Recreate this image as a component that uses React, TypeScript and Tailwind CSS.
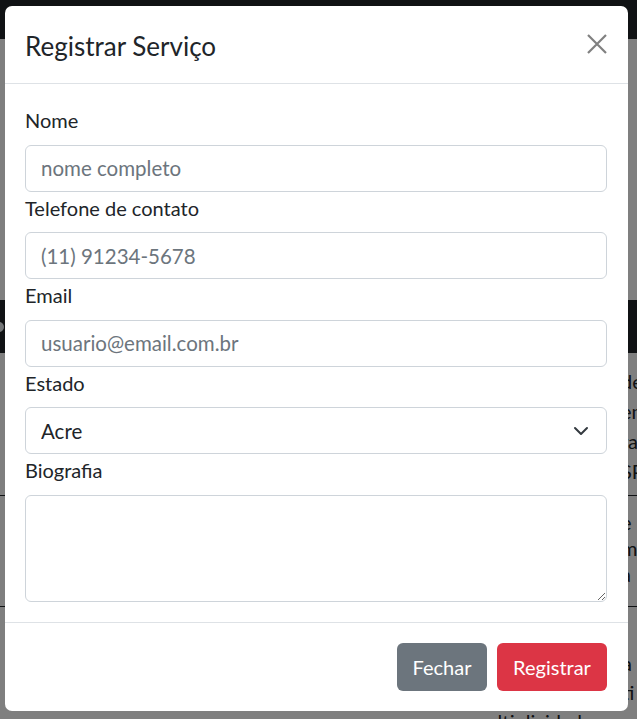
import React from "react";

const lines1 = ["de", "em", "ra", "SP"];
const lines2 = ["e", "m", "a"];

function BackgroundPage() {
  return (
    <div className="font-['Lato',sans-serif] text-[20px] text-[#212529]">
      {/* Navbar */}
      <div className="h-[39px] bg-[#212529]" />

      {/* Page intro area */}
      <div className="h-[261px] bg-white" />

      {/* Table header */}
      <div className="flex h-[53px] items-center bg-[#212529]">
        <span className="-ml-[6px] h-[10px] w-[10px] rounded-full bg-[#e9ecef]" />
      </div>

      {/* Row 1 */}
      <div className="grid h-[143px] grid-cols-[621px_1fr] border-b border-[#212529] pt-[13px]">
        <div />
        <div className="leading-[30px]">
          {lines1.map((l) => (
            <div key={l} className="whitespace-nowrap">
              {l}
            </div>
          ))}
        </div>
      </div>

      {/* Row 2 */}
      <div className="grid h-[111px] grid-cols-[621px_1fr] border-b border-[#212529] pt-[13px]">
        <div />
        <div className="leading-[26px]">
          {lines2.map((l) => (
            <div key={l} className="whitespace-nowrap">
              {l}
            </div>
          ))}
        </div>
      </div>

      {/* Row 3 */}
      <div className="grid grid-cols-[470px_1fr] pt-[13px] leading-[29px]">
        <div />
        <div className="overflow-hidden">
          <div className="whitespace-nowrap pl-[152px]">l</div>
          <div className="whitespace-nowrap pl-[152px]">a</div>
          <div className="whitespace-nowrap pl-[152px]">ti</div>
          <div className="whitespace-nowrap">multiplicidade</div>
        </div>
      </div>
    </div>
  );
}

function Field({ label, children }: { label: string; children: React.ReactNode }) {
  return (
    <div>
      <label className="mb-2 block h-[32.5px] text-[20px] leading-[32.5px] text-[#212529]">{label}</label>
      {children}
    </div>
  );
}

const inputCls =
  "block h-[47px] w-full rounded-[6px] border border-[#ced4da] bg-white px-[15px] text-[20.5px] text-[#212529] outline-none placeholder:text-[#6c757d]";

export default function App() {
  return (
    <div className="relative h-[719px] overflow-hidden bg-white">
      <BackgroundPage />

      {/* Backdrop */}
      <div className="absolute inset-0 bg-black/50" />

      {/* Modal */}
      <div className="absolute left-[5px] top-[6px] flex h-[705px] w-[623px] flex-col rounded-[7px] bg-white font-['Lato',sans-serif] text-[#212529]">
        {/* Header */}
        <div className="flex h-[79px] items-center justify-between border-b border-[#dee2e6] pl-5 pr-[21px]">
          <h5 className="mt-[3px] text-[26px] leading-[38px]">Registrar Serviço</h5>
          <button className="flex h-[20px] w-[20px] items-center justify-center" aria-label="Fechar">
            <svg width="20" height="20" viewBox="0 0 20 20" fill="none">
              <path d="M1 1L19 19M19 1L1 19" stroke="#808080" strokeWidth="2.2" />
            </svg>
          </button>
        </div>

        {/* Body */}
        <div className="flex-1 border-b border-[#dee2e6] pb-5 pl-5 pr-[21px] pt-[20.5px]">
          <Field label="Nome">
            <input className={inputCls} placeholder="nome completo" />
          </Field>
          <Field label="Telefone de contato">
            <input className={inputCls} placeholder="(11) 91234-5678" />
          </Field>
          <Field label="Email">
            <input className={inputCls} placeholder="usuario@email.com.br" />
          </Field>
          <Field label="Estado">
            <div className="relative">
              <select className={inputCls + " appearance-none"} defaultValue="AC">
                <option value="AC">Acre</option>
                <option value="AL">Alagoas</option>
                <option value="AP">Amapá</option>
                <option value="SP">São Paulo</option>
              </select>
              <svg
                className="pointer-events-none absolute right-[18px] top-[16px]"
                width="16"
                height="16"
                viewBox="0 0 16 16"
                fill="none"
              >
                <path d="M2 5l6 6 6-6" stroke="#343a40" strokeWidth="2" strokeLinecap="round" strokeLinejoin="round" />
              </svg>
            </div>
          </Field>
          <Field label="Biografia">
            <textarea className="block h-[107px] w-full rounded-[6px] border border-[#ced4da] bg-white px-[15px] py-2 text-[20px] outline-none" />
          </Field>
        </div>

        {/* Footer */}
        <div className="flex h-[89px] items-start justify-end gap-[10px] pl-5 pr-[21px] pt-5">
          <button className="h-[48px] w-[90px] rounded-[6px] bg-[#6c757d] text-[20px] text-white">Fechar</button>
          <button className="h-[48px] w-[110px] rounded-[6px] bg-[#dc3545] text-[20px] text-white">Registrar</button>
        </div>
      </div>
    </div>
  );
}
